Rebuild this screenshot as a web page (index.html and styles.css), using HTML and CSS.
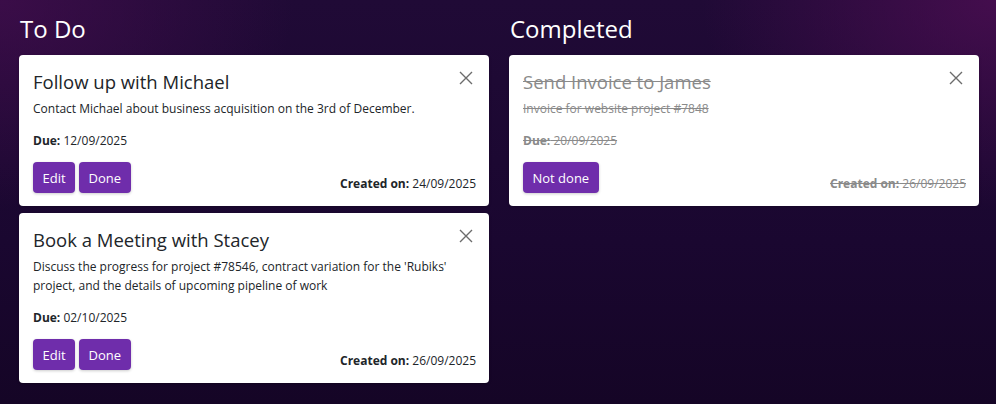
FILE: index.html
```html
<!DOCTYPE html>
<html>
<head>
<meta charset="utf-8">
<link rel="stylesheet" href="styles.css">
</head>
<body>
<div class="board">
  <section class="column">
    <h2 class="column-title">To Do</h2>
    <div class="card">
      <button class="close" aria-label="Delete"><svg viewBox="0 0 16 16" width="16" height="16"><path d="M2 2L14 14M14 2L2 14" stroke="#6c6c6c" stroke-width="1.4" fill="none"/></svg></button>
      <h3 class="card-title">Follow up with Michael</h3>
      <p class="card-desc">Contact Michael about business acquisition on the 3rd of December.</p>
      <p class="card-due"><b>Due:</b> 12/09/2025</p>
      <div class="card-foot">
        <div class="actions"><button class="btn">Edit</button><button class="btn">Done</button></div>
        <span class="created"><b>Created on:</b> 24/09/2025</span>
      </div>
    </div>
    <div class="card">
      <button class="close" aria-label="Delete"><svg viewBox="0 0 16 16" width="16" height="16"><path d="M2 2L14 14M14 2L2 14" stroke="#6c6c6c" stroke-width="1.4" fill="none"/></svg></button>
      <h3 class="card-title">Book a Meeting with Stacey</h3>
      <p class="card-desc">Discuss the progress for project #78546, contract variation for the 'Rubiks' project, and the details of upcoming pipeline of work</p>
      <p class="card-due"><b>Due:</b> 02/10/2025</p>
      <div class="card-foot">
        <div class="actions"><button class="btn">Edit</button><button class="btn">Done</button></div>
        <span class="created"><b>Created on:</b> 26/09/2025</span>
      </div>
    </div>
  </section>
  <section class="column">
    <h2 class="column-title">Completed</h2>
    <div class="card card-done">
      <button class="close" aria-label="Delete"><svg viewBox="0 0 16 16" width="16" height="16"><path d="M2 2L14 14M14 2L2 14" stroke="#6c6c6c" stroke-width="1.4" fill="none"/></svg></button>
      <h3 class="card-title">Send Invoice to James</h3>
      <p class="card-desc">Invoice for website project #7848</p>
      <p class="card-due"><b>Due:</b> 20/09/2025</p>
      <div class="card-foot">
        <div class="actions"><button class="btn">Not done</button></div>
        <span class="created"><b>Created on:</b> 26/09/2025</span>
      </div>
    </div>
  </section>
</div>
</body>
</html>
```
FILE: styles.css
```css
html, body {
  margin: 0;
  height: 100%;
}
body {
  font-family: "Open Sans", "Noto Sans", sans-serif;
  background:
    radial-gradient(ellipse 420px 300px at 0% 0%, rgba(70, 14, 80, 0.7), transparent 70%),
    radial-gradient(ellipse 420px 300px at 100% 0%, rgba(80, 14, 85, 0.75), transparent 70%),
    linear-gradient(180deg, #200a36 0%, #1a0730 60%, #150526 100%);
  color: #212529;
}
.board {
  display: grid;
  grid-template-columns: 470px 470px;
  column-gap: 20px;
  padding: 13px 18px 0 19px;
}
.column {
  display: flex;
  flex-direction: column;
  gap: 7px;
}
.column-title {
  margin: 0 0 3px 1px;
  font-size: 24px;
  font-weight: 400;
  line-height: 32px;
  color: #fff;
}
.card {
  position: relative;
  background: #fff;
  border-radius: 4px;
  padding: 15px 13px 13px 14px;
  box-shadow: 0 1px 3px rgba(0,0,0,0.2);
}
.close {
  position: absolute;
  top: 15px;
  right: 15px;
  padding: 0;
  border: 0;
  background: none;
  width: 16px;
  height: 16px;
}
.close svg { display: block; }
.card-title {
  margin: 0;
  font-size: 18.5px;
  font-weight: 400;
  line-height: 24px;
  color: #212529;
}
.card-desc {
  margin: 5px 0 0;
  font-size: 12px;
  line-height: 19px;
  padding-right: 20px;
}
.card-due {
  margin: 13px 0 0;
  font-size: 12px;
  line-height: 19px;
}
.card-due b, .created b { font-weight: 700; }
.card-foot {
  margin-top: 12px;
  display: flex;
  justify-content: space-between;
  align-items: flex-end;
}
.actions {
  display: flex;
  gap: 4px;
}
.btn {
  font-family: inherit;
  font-size: 13px;
  height: 31px;
  padding: 0 9.5px;
  border: 0;
  border-radius: 4px;
  background: #6f2dab;
  color: #fff;
  box-shadow: 0 1px 3px rgba(0,0,0,0.2);
}
.created {
  font-size: 12px;
  line-height: 19px;
}
.card-done .card-title,
.card-done .card-desc,
.card-done .card-due,
.card-done .created {
  color: #8a8a8a;
  text-decoration: line-through;
}
```
